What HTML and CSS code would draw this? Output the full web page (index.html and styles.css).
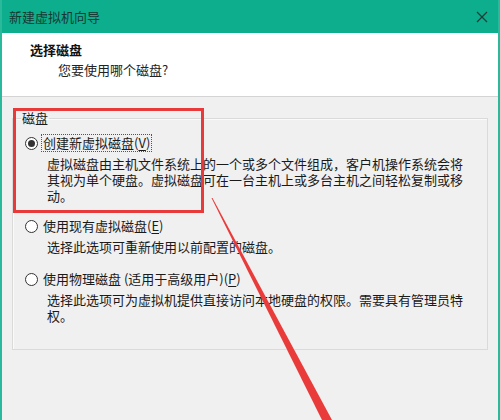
FILE: index.html
```html
<!DOCTYPE html>
<html lang="zh-CN">
<head>
<meta charset="utf-8">
<title>新建虚拟机向导</title>
<link rel="stylesheet" href="styles.css">
</head>
<body>
<div class="window">
  <div class="titlebar">
    <span class="title">新建虚拟机向导</span>
    <svg class="close" width="12" height="12" viewBox="0 0 12 12"><path d="M1 1L11 11M11 1L1 11" stroke="#1d3d36" stroke-width="1.2" fill="none"/></svg>
  </div>
  <div class="header">
    <div class="h-title">选择磁盘</div>
    <div class="h-sub">您要使用哪个磁盘?</div>
  </div>
  <div class="content">
    <fieldset class="group">
      <legend class="legend">磁盘</legend>
      <div class="option first">
        <div class="row"><span class="radio checked"></span><span class="label focus">创建新虚拟磁盘(<u>V</u>)</span></div>
        <div class="desc">虚拟磁盘由主机文件系统上的一个或多个文件组成，客户机操作系统会将<br>其视为单个硬盘。虚拟磁盘可在一台主机上或多台主机之间轻松复制或移<br>动。</div>
      </div>
      <div class="option second">
        <div class="row"><span class="radio"></span><span class="label">使用现有虚拟磁盘(<u>E</u>)</span></div>
        <div class="desc">选择此选项可重新使用以前配置的磁盘。</div>
      </div>
      <div class="option third">
        <div class="row"><span class="radio"></span><span class="label">使用物理磁盘 (适用于高级用户)(<u>P</u>)</span></div>
        <div class="desc">选择此选项可为虚拟机提供直接访问本地硬盘的权限。需要具有管理员特<br>权。</div>
      </div>
    </fieldset>
  </div>
  <div class="highlight"></div>
  <svg class="arrow" width="500" height="420" viewBox="0 0 500 420"><polygon points="211.5,198 212.5,198 332,420 322,420" fill="#ea3b3b"/></svg>
</div>
</body>
</html>
```
FILE: styles.css
```css
* { box-sizing: border-box; }
html, body { margin: 0; padding: 0; }
body {
  width: 500px;
  height: 420px;
  overflow: hidden;
  font-family: "Noto Sans CJK SC", "Noto Sans", sans-serif;
  font-size: 13px;
  color: #1a1a1a;
  background: #f0f0f0;
}
.window {
  position: relative;
  width: 500px;
  height: 420px;
  border-left: 2px solid #2bb99b;
  border-right: 2px solid #2bb99b;
  background: #f0f0f0;
}
.titlebar {
  height: 33px;
  background: #0cae8e;
  display: flex;
  align-items: center;
  justify-content: space-between;
  padding: 0 10px 0 7px;
  color: #163a33;
  line-height: 16px;
}
.close { display: block; }
.header {
  height: 64px;
  background: #ffffff;
  border-bottom: 1px solid #d4d4d4;
  padding: 9px 0 0 28px;
  line-height: 16px;
}
.h-title { font-weight: bold; color: #111; }
.h-sub { margin: 4px 0 0 28px; color: #222; }
.content {
  padding: 13px 10px 0 10px;
}
.group {
  margin: 0;
  padding: 0 0 25px 12px;
  border: 1px solid #dadada;
  box-shadow: inset 1px 1px 0 #fafafa;
  min-width: 0;
}
.legend {
  padding: 0 1px;
  margin-left: -4px;
  line-height: 16px;
}
.option.first { margin-top: 8px; }
.option.second { margin-top: 13px; }
.option.third { margin-top: 15px; }
.row {
  display: flex;
  align-items: center;
  height: 18px;
  line-height: 16px;
}
.radio {
  width: 13px;
  height: 13px;
  border: 1px solid #333;
  border-radius: 50%;
  background: #fff;
  display: flex;
  align-items: center;
  justify-content: center;
  flex: none;
}
.radio.checked::after {
  content: "";
  width: 7px;
  height: 7px;
  border-radius: 50%;
  background: #333;
}
.label {
  margin-left: 3px;
  padding: 0 1px;
  border: 1px dotted transparent;
}
.label.focus { border-color: #555; }
.label u { text-underline-offset: 2px; }
.desc {
  margin-top: 4px;
  padding-left: 22px;
  line-height: 16px;
  white-space: nowrap;
  text-spacing-trim: space-all;
}
.highlight {
  position: absolute;
  left: 11px;
  top: 108px;
  width: 191px;
  height: 105px;
  border: 3px solid #e8393b;
}
.arrow {
  position: absolute;
  left: -2px;
  top: 0;
  pointer-events: none;
}
```
